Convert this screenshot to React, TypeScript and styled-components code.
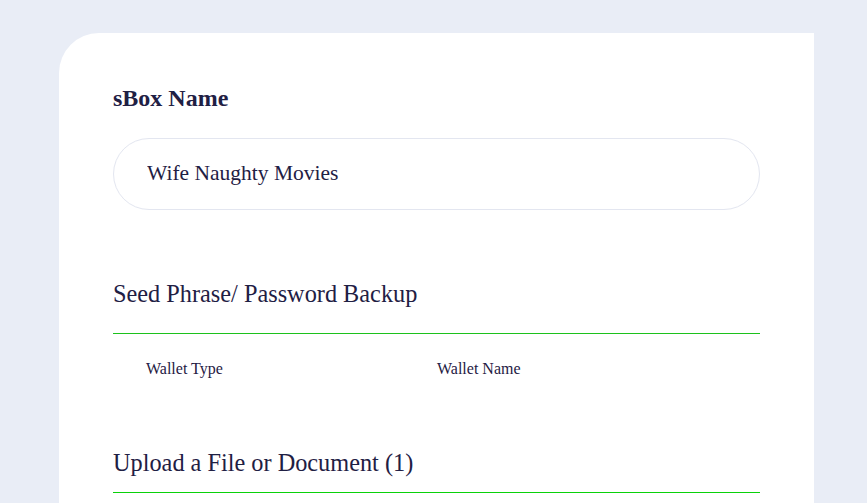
import styled, { createGlobalStyle } from "styled-components";

const GlobalStyle = createGlobalStyle`
    html, body{
        margin:0;
        padding:0;
        background-color:#e9edf6;
    }
    body{
        font-family:'Liberation Serif', 'Times New Roman', serif;
        color:#1f2044;
    }
`;

const Page = styled.div`
    min-height:503px;
    padding:33px 0 0 59px;
    box-sizing:border-box;
    overflow:hidden;
`;

const Card = styled.div`
    width:755px;
    min-height:560px;
    box-sizing:border-box;
    padding:52px 54px 40px;
    background-color:#fff;
    border-top-left-radius:40px;
`;

const Label = styled.h3`
    margin:0;
    font-size:24px;
    font-weight:700;
    line-height:1.15;
`;

const Input = styled.input`
    display:block;
    width:100%;
    height:72px;
    box-sizing:border-box;
    margin-top:25px;
    padding:0 33px;
    border:1px solid #e3e6f0;
    border-radius:36px;
    outline:none;
    font-family:inherit;
    font-size:21.5px;
    color:#1f2044;
    background:#fff;
`;

const SectionTitle = styled.h4<{ $gap: number; $pad: number; $line: string }>`
    margin:${p => p.$gap}px 0 0;
    padding-bottom:${p => p.$pad}px;
    border-bottom:1px solid ${p => p.$line};
    font-size:24.3px;
    font-weight:400;
    line-height:1.15;
`;

const WalletRow = styled.div`
    display:grid;
    grid-template-columns:291px 1fr;
    padding:26px 0 0 33px;
    font-size:16px;
    line-height:1.15;
`;

export default function App() {
    return (
        <>
            <GlobalStyle />
            <Page>
                <Card>
                    <Label>sBox Name</Label>
                    <Input defaultValue="Wife Naughty Movies" readOnly />

                    <SectionTitle $gap={70} $pad={25} $line="#1cc21c">Seed Phrase/ Password Backup</SectionTitle>
                    <WalletRow>
                        <span>Wallet Type</span>
                        <span>Wallet Name</span>
                    </WalletRow>

                    <SectionTitle $gap={71} $pad={15} $line="#0ad20a">Upload a File or Document (1)</SectionTitle>
                </Card>
            </Page>
        </>
    );
}
